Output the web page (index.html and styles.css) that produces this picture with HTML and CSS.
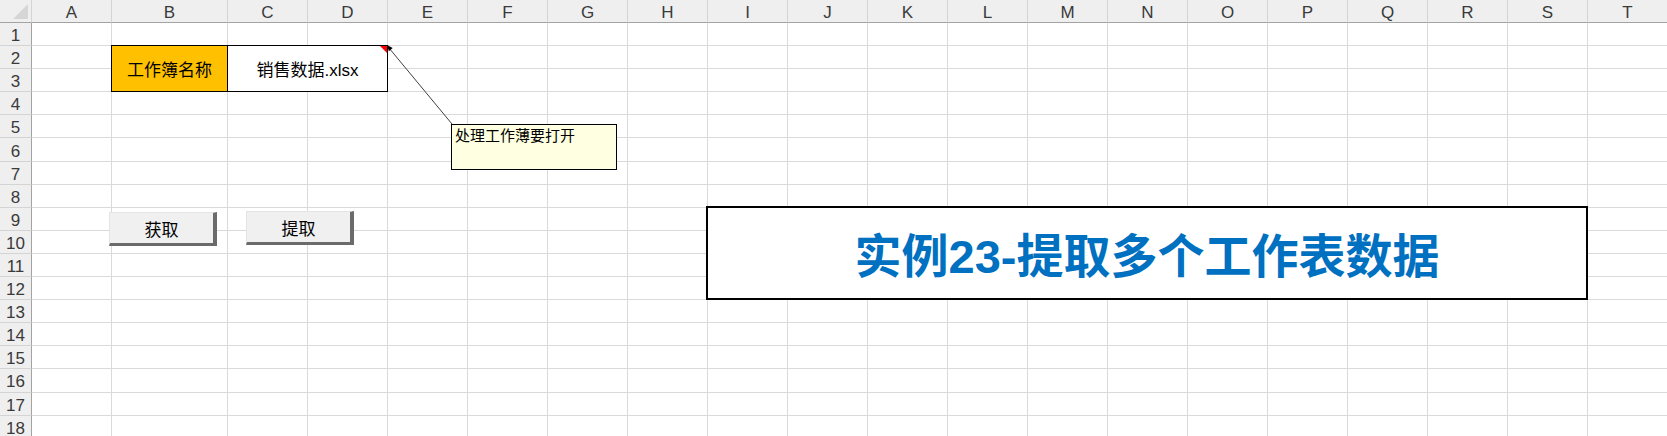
FILE: index.html
```html
<!DOCTYPE html>
<html lang="zh-CN">
<head>
<meta charset="utf-8">
<title>实例23-提取多个工作表数据</title>
<link rel="stylesheet" href="styles.css">
</head>
<body>
<div class="sheet">
    <!-- merged cells -->
    <div class="label">工作簿名称</div>
    <div class="file">销售数据.xlsx</div>
    <div class="title">实例23-提取多个工作表数据</div>

    <!-- column headers -->
    <div class="corner"></div>
    <div class="hd">A</div><div class="hd">B</div><div class="hd">C</div><div class="hd">D</div><div class="hd">E</div>
    <div class="hd">F</div><div class="hd">G</div><div class="hd">H</div><div class="hd">I</div><div class="hd">J</div>
    <div class="hd">K</div><div class="hd">L</div><div class="hd">M</div><div class="hd">N</div><div class="hd">O</div>
    <div class="hd">P</div><div class="hd">Q</div><div class="hd">R</div><div class="hd">S</div><div class="hd">T</div>

    <!-- rows 1-18, merged areas are skipped by the grid -->
    <div class="rn">1</div><i></i><i></i><i></i><i></i><i></i><i></i><i></i><i></i><i></i><i></i><i></i><i></i><i></i><i></i><i></i><i></i><i></i><i></i><i></i><i></i>
    <div class="rn">2</div><i></i><i></i><i></i><i></i><i></i><i></i><i></i><i></i><i></i><i></i><i></i><i></i><i></i><i></i><i></i><i></i><i></i>
    <div class="rn">3</div><i></i><i></i><i></i><i></i><i></i><i></i><i></i><i></i><i></i><i></i><i></i><i></i><i></i><i></i><i></i><i></i><i></i>
    <div class="rn">4</div><i></i><i></i><i></i><i></i><i></i><i></i><i></i><i></i><i></i><i></i><i></i><i></i><i></i><i></i><i></i><i></i><i></i><i></i><i></i><i></i>
    <div class="rn">5</div><i></i><i></i><i></i><i></i><i></i><i></i><i></i><i></i><i></i><i></i><i></i><i></i><i></i><i></i><i></i><i></i><i></i><i></i><i></i><i></i>
    <div class="rn">6</div><i></i><i></i><i></i><i></i><i></i><i></i><i></i><i></i><i></i><i></i><i></i><i></i><i></i><i></i><i></i><i></i><i></i><i></i><i></i><i></i>
    <div class="rn">7</div><i></i><i></i><i></i><i></i><i></i><i></i><i></i><i></i><i></i><i></i><i></i><i></i><i></i><i></i><i></i><i></i><i></i><i></i><i></i><i></i>
    <div class="rn">8</div><i></i><i></i><i></i><i></i><i></i><i></i><i></i><i></i><i></i><i></i><i></i><i></i><i></i><i></i><i></i><i></i><i></i><i></i><i></i><i></i>
    <div class="rn">9</div><i></i><i></i><i></i><i></i><i></i><i></i><i></i><i></i><i></i>
    <div class="rn">10</div><i></i><i></i><i></i><i></i><i></i><i></i><i></i><i></i><i></i>
    <div class="rn">11</div><i></i><i></i><i></i><i></i><i></i><i></i><i></i><i></i><i></i>
    <div class="rn">12</div><i></i><i></i><i></i><i></i><i></i><i></i><i></i><i></i><i></i>
    <div class="rn">13</div><i></i><i></i><i></i><i></i><i></i><i></i><i></i><i></i><i></i><i></i><i></i><i></i><i></i><i></i><i></i><i></i><i></i><i></i><i></i><i></i>
    <div class="rn">14</div><i></i><i></i><i></i><i></i><i></i><i></i><i></i><i></i><i></i><i></i><i></i><i></i><i></i><i></i><i></i><i></i><i></i><i></i><i></i><i></i>
    <div class="rn">15</div><i></i><i></i><i></i><i></i><i></i><i></i><i></i><i></i><i></i><i></i><i></i><i></i><i></i><i></i><i></i><i></i><i></i><i></i><i></i><i></i>
    <div class="rn">16</div><i></i><i></i><i></i><i></i><i></i><i></i><i></i><i></i><i></i><i></i><i></i><i></i><i></i><i></i><i></i><i></i><i></i><i></i><i></i><i></i>
    <div class="rn">17</div><i></i><i></i><i></i><i></i><i></i><i></i><i></i><i></i><i></i><i></i><i></i><i></i><i></i><i></i><i></i><i></i><i></i><i></i><i></i><i></i>
    <div class="rn">18</div><i></i><i></i><i></i><i></i><i></i><i></i><i></i><i></i><i></i><i></i><i></i><i></i><i></i><i></i><i></i><i></i><i></i><i></i><i></i><i></i>

    <!-- floating shapes: comment, its pointer, and the two macro buttons -->
    <svg class="pointer" width="72" height="86" viewBox="0 0 72 86">
        <line x1="5" y1="6" x2="68" y2="82" stroke="#404040" stroke-width="1"/>
        <polygon points="3,3 4.9,9.2 8.7,6" fill="#000"/>
    </svg>
    <div class="note">处理工作薄要打开</div>
    <button type="button" class="btn btn-get">获取</button>
    <button type="button" class="btn btn-pick">提取</button>
</div>
</body>
</html>
```

FILE: styles.css
```css
*{
    box-sizing: border-box;
}
body{
    margin: 0;
    overflow: hidden;
    background: #fff;
    font-family: "Liberation Sans", "Noto Sans CJK SC", sans-serif;
}
.sheet{
    position: relative;
    display: grid;
    grid-template-columns: 32px 80px 116px repeat(18, 80px);
    grid-template-rows: 23px repeat(18, 23.1px);
    width: 1668px;
}
.sheet i{
    display: block;
    border-right: 1px solid #dadada;
    border-bottom: 1px solid #dadada;
}

/* headers */
.corner, .hd, .rn{
    display: flex;
    justify-content: center;
    align-items: center;
    padding-top: 4px;
    background: #efefef;
    color: #3a3a3a;
    font-size: 17px;
}
.corner{
    position: relative;
    border-right: 1px solid #d4d4d4;
    border-bottom: 1px solid #a3a3a3;
}
.corner::after{
    content: "";
    position: absolute;
    left: 13px;
    top: 4px;
    width: 15px;
    height: 15px;
    background: #d6d6d6;
    clip-path: polygon(100% 0, 100% 100%, 0 100%);
}
.hd{
    border-right: 1px solid #d4d4d4;
    border-bottom: 1px solid #a3a3a3;
}
.rn{
    border-right: 1px solid #a3a3a3;
    border-bottom: 1px solid #d4d4d4;
}

/* merged cells */
.label, .file, .title{
    z-index: 1;
    display: flex;
    justify-content: center;
    align-items: center;
    color: #000;
}
.label{
    grid-column: 3;
    grid-row: 3 / span 2;
    margin: -1px 0 0 -1px;
    border: 1px solid #000;
    background: #ffc000;
    font-size: 17px;
}
.file{
    position: relative;
    grid-column: 4 / span 2;
    grid-row: 3 / span 2;
    margin: -1px 0 0 -1px;
    border: 1px solid #000;
    background: #fff;
    font-size: 17px;
}
.file::after{
    content: "";
    position: absolute;
    top: 0;
    right: 0;
    width: 7px;
    height: 7px;
    background: #f00;
    clip-path: polygon(0 0, 100% 0, 100% 100%);
}
.title{
    grid-column: 10 / span 11;
    grid-row: 10 / span 4;
    margin: -2px 0 0 -2px;
    border: 2px solid #000;
    background: #fff;
    color: #0070c0;
    font-size: 47px;
    font-weight: bold;
}

/* floating shapes */
.pointer{
    position: absolute;
    left: 384px;
    top: 42px;
    z-index: 2;
}
.note{
    position: absolute;
    left: 451px;
    top: 124px;
    z-index: 2;
    width: 166px;
    height: 46px;
    padding: 0 3px;
    border: 1px solid #000;
    background: #ffffe1;
    color: #000;
    font-family: "Noto Sans CJK SC", sans-serif;
    font-size: 15px;
    line-height: 20px;
}
.btn{
    position: absolute;
    z-index: 2;
    width: 108px;
    height: 34px;
    padding: 0;
    border-style: solid;
    border-width: 1px 4px 3px 1px;
    border-color: #e4e4e4 #6b6b6b #6b6b6b #e4e4e4;
    background: #f0f0f0;
    color: #000;
    font-family: "Noto Sans CJK SC", sans-serif;
    font-size: 17px;
    line-height: 1;
}
.btn-get{
    left: 109px;
    top: 212px;
}
.btn-pick{
    left: 246px;
    top: 211px;
}
```
